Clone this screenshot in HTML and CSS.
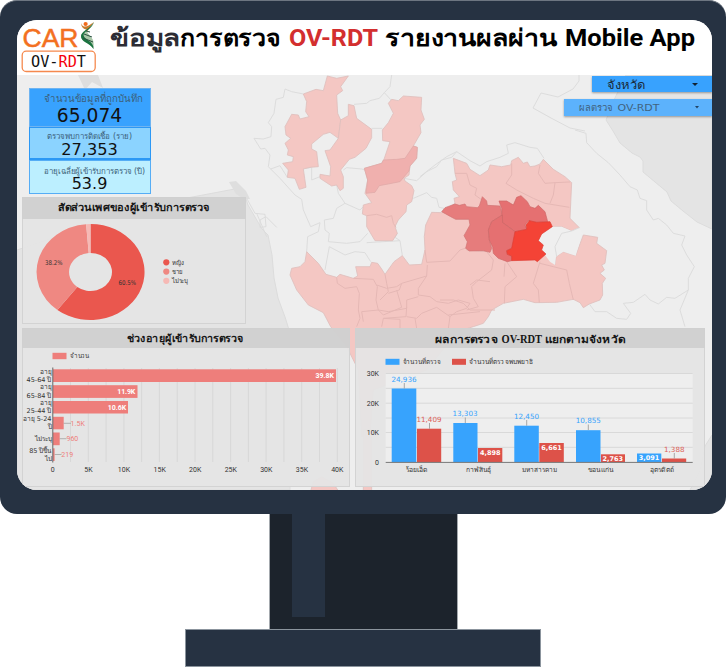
FILE: index.html
```html
<!DOCTYPE html>
<html lang="th">
<head>
<meta charset="utf-8">
<title>OV-RDT Dashboard</title>
<link rel="stylesheet" href="styles.css">
</head>
<body>
<div class="monitor">
  <div class="screen">
    <header class="header">
      <svg class="logo" viewBox="17 20 84 55" width="84" height="55">
        <text class="logo-car" x="22.5" y="47.3" textLength="56" lengthAdjust="spacingAndGlyphs">CAR</text>
        <path d="M94 22C90 25 87 27 84 26.500C82.500 26 81.500 24.500 81 23C81.500 27 83 29 86 29.500C85 32 83 34 82 36L85 34C88 30 91 26 94 22Z" fill="#c77a2c"/>
        <circle cx="85.600" cy="24" r="2.100" fill="#f26a1b"/>
        <path d="M87 29C86 33 91 36 93 40C94 43 93.500 46 93.500 49C91 44 83 42 81 37C80.500 34 84 31 87 29Z" fill="#a9c7a8"/>
        <path d="M94 22C92 29 84 31 83.500 35C84 40 94 41 93.500 49C90 43 80.500 42 81 36C81.500 31 90 29 94 22Z" fill="#1b7340"/>
        <path d="M84 34L92 37M83 38L93 42M86 31L90 32" stroke="#2a5040" stroke-width="1"/>
        <rect x="22.200" y="51.200" width="73" height="20.300" rx="4" fill="#fff" stroke="#f5894e" stroke-width="1.300"/>
        <text class="logo-mono" x="31" y="66.500" textLength="55" lengthAdjust="spacingAndGlyphs">OV-<tspan fill="#f5000b">RD</tspan>T</text>
      </svg>
      <svg class="title" viewBox="101 20 611 55" width="611" height="55" role="heading">
        <text x="110" y="45.500" textLength="70" lengthAdjust="spacingAndGlyphs" fill="#2c2c34">ข้อมูล</text>
        <text x="180" y="45.500" textLength="101" lengthAdjust="spacingAndGlyphs">การตรวจ</text>
        <text x="289" y="45.500" textLength="89" lengthAdjust="spacingAndGlyphs" fill="#d32f2f">OV-RDT</text>
        <text x="385" y="45.500" textLength="172" lengthAdjust="spacingAndGlyphs">รายงานผลผ่าน</text>
        <text x="565" y="45.500" textLength="130" lengthAdjust="spacingAndGlyphs">Mobile App</text>
      </svg>
    </header>

    <main class="dashboard">
      <svg class="map" viewBox="17 75 695 415" width="695" height="415">
        <path class="sea" d="M626 75L614 100 606 120 613 131 620 143 632 153 640 157 643 161 643 172 655 182 667 192 671 201 683 211 697 222 712 229V75Z"/>
        <path class="sea" d="M17 328V250L150 205 240 188 245 196 248 205 255 217 262 229 268 235 272 255 274 278 278 298 285 317 290 333V490H17Z"/>
        <path class="sea" d="M712 435L705 446 700 470 690 490H712Z"/>
        <path class="isle" d="M78 75L85 90 92 82 103 88 98 75Z"/>
        <path class="isle" d="M229 182l7-1 10 10 4 8-6 0-8-5z"/>
        <g transform="translate(240 70) scale(.33333)">
          <g class="border">
            <path d="M455 15L450 50 433 68 418 85 390 92 380 100 342 103M433 68L455 92M190 72L155 65 135 57 130 82 108 88 102 130 85 158 95 170 93 200 70 207 42 205 62 237 75 235 90 255 85 290 120 325 165 375 185 388 190 420 212 470 240 458 235 485 203 500 200 545"/>
            <path d="M92 297L120 287 142 322M198 295L215 292 215 330 240 320M290 345L295 370 315 400 290 415 280 445 253 450 255 480 268 490 265 515 320 520 360 515 383 490M310 300L320 293 365 297 375 300M315 400L360 420 370 410M395 175L427 175M268 530L315 555 345 545 375 548 392 575M268 530L255 600M380 518L480 512 487 557M472 490L465 502 480 512M498 400L520 385 560 368 575 382 590 385 597 412 612 415M492 325L530 332 560 305 590 290 605 270 635 262 650 245"/>
            <path d="M20 385L45 430 75 433 78 470 60 472 60 450 78 440 110 472M50 430L80 500"/>
          </g>
          <g class="low">
            <path d="M262 18L290 25 325 18 302 50 308 62 290 75 293 130 302 150 295 205 270 187 250 193 215 222 215 237 230 245 235 290 210 292 190 297 198 352 178 358 165 325 142 322 145 300 128 280 158 275 160 260 142 255 145 240 135 220 152 205 138 195 135 170 155 133 175 135 180 147 207 140 197 125 200 95 190 72 228 58 250 62Z"/>
            <path d="M325 103L342 107 350 145 395 178 395 203 378 235 345 262 328 268 302 300 310 320 310 355 300 362 290 345 275 348 240 325 240 313 270 318 272 290 255 242 270 240 295 205 302 150 325 137Z"/>
            <path d="M490 78L545 82 543 120 553 148 540 165 543 188 520 228 532 232 530 265 510 288 507 315 492 325 495 333 515 347 522 362 515 395 500 405 498 425 475 450 465 470 472 490 458 512 405 512 380 470 380 437 367 432 370 405 395 398 375 370 383 330 373 295 425 280 432 268 450 215 428 212 427 180 445 158 460 130 445 100 455 88 475 92Z"/>
            <path d="M200 545L235 580 258 613 290 622 300 613 340 625 353 618 347 590 390 590 395 577 413 580 425 597 435 613 462 575 487 557 508 585 545 583 555 540 553 500 557 465 575 427 605 428 645 400 642 385 658 380 640 360 637 335 650 330 645 310 640 265 680 280 690 298 720 317 745 300 750 285 785 290 812 285 815 272 835 262 850 280 862 276 870 290 885 288 900 282 910 268 940 298 975 320 995 338 990 445 1018 473 995 483 965 470 935 470 910 490 895 512 905 530 900 545 915 555 945 585 948 560 970 545 1007 557 1030 495 1073 502 1070 520 1100 542 1095 580 1085 585 1093 600 1080 610 1097 625 1087 640 1088 675 1080 690 1048 702 1030 713 1020 698 1000 688 950 697 885 698 850 688 790 700 755 720 745 740 730 760 700 770 660 782 640 800 560 900 480 930 400 960 390 1100 365 1100 355 900 320 830 272 770 250 728 205 705 170 660 150 615 155 595 180 590 195 575Z"/>
            <path d="M210 1270L220 1235 245 1220 280 1240 300 1270Z"/>
            <path d="M370 1080H395V1270H370Z"/>
          </g>
          <path class="land" d="M935 470L965 470 995 483 1018 473 1027 490 1007 557 970 545 948 560 945 585 930 575 915 555 900 545 910 530 895 512 905 492Z"/>
          <path class="border" d="M1018 473L995 483 965 490 945 530 950 560"/>
          <path class="mid" d="M520 228L532 232 530 265 510 288 507 303 480 335 445 342 418 347 405 367 378 370 383 330 373 295 425 280 430 270 470 268 495 265Z"/>
          <g class="province">
            <path d="M380 437L410 433 440 442 455 437 460 460 468 472M290 622L292 640 315 655 350 650 358 670 355 720 360 745 350 770M340 625L400 628 412 650 408 690 415 720 365 725 370 755M435 613L440 640 445 665 420 690M410 645L440 655 470 650 485 640 560 618 562 585M470 660L485 712 430 735 415 720M560 618L535 655 535 675 570 680 590 695 625 700 655 690 690 700 680 715 650 725 630 740 625 775M485 640L478 660 445 670M415 720L445 725 500 715 500 690 535 680M500 710L498 740 430 745 425 770M500 740L530 745 545 730 590 712 630 740M555 540L560 577 630 573 660 540 690 530M690 645L710 630 750 635M625 735L720 725M430 745L480 748 480 775M525 745L530 775"/>
            <path d="M645 310L680 310 690 345 710 355 705 375 740 400M815 280L815 315 798 340 830 360 880 385 915 400M900 285L895 310 915 340 945 338 940 375 930 400M915 400L988 412M945 338L990 336M680 540L740 545 760 570 755 600 710 635 695 650 700 685 715 710 680 720M795 580L792 620M800 575L830 620 795 650 793 700M900 575L880 640 895 660 898 698M900 580L940 590 980 600 988 640 1000 690M600 690L640 690 670 700 690 720 765 720"/>
          </g>
        </g>
        <g transform="translate(420 130) scale(.33333)">
          <path class="high" d="M65 245L75 233 105 222 118 226 135 222 140 230 172 233 178 228 187 200 200 213 202 226 240 228 247 255 215 275 205 300 208 330 215 355 210 367 190 362 148 363 137 355 142 335 132 317 150 285 147 268 107 268 92 260Z"/>
          <path class="higher" d="M237 213L260 213 280 225 290 202 303 197 322 215 330 230 345 235 355 226 375 245 383 275 350 277 325 272 315 285 320 298 285 305 265 290 247 278 245 235Z"/>
          <path class="higher" d="M247 255L248 278 285 305 282 340 275 355 260 362 262 373 275 378 275 392 262 395 235 385 220 370 218 352 208 330 205 300 215 275Z"/>
          <path class="top" d="M285 305L320 298 318 285 328 272 350 277 390 275 397 290 365 312 355 332 370 345 365 360 378 372 352 395 345 390 275 392 275 378 262 373 260 362 275 355Z"/>
          <g class="border">
            <path d="M110 65L150 92 180 108 200 95 240 82 265 70 260 45 285 38 330 52 352 55 372 85M110 65L80 80 45 105 0 140M465 0L498 10 500 38 530 70 565 98 600 135 630 170 652 180 660 205 680 212 680 240 700 270 715 265 740 285 760 310 795 318 785 345 800 375 823 410 805 445 805 480 765 505 740 502 715 522 690 510 675 493 640 517 610 520 632 550 620 568 590 565 560 545 525 545 508 522M805 480L780 540 795 590"/>
          </g>
        </g>
        <path class="border" d="M579 75L579 81 573 89 558 97 541 93 533 108 551 118 570 128 585 131"/>
      </svg>

      <div class="upper">
        <div class="side">
          <section class="cards">
            <div class="card card-a"><svg viewBox="0 0 122 39"><text class="lbl" x="15" y="13.500" font-size="10" textLength="99" lengthAdjust="spacingAndGlyphs">จำนวนข้อมูลที่ถูกบันทึก</text><text class="num" x="60.500" y="33.500" font-size="18.700">65,074</text></svg></div>
            <div class="card card-b"><svg viewBox="0 0 122 33"><text class="lbl" x="18" y="12" font-size="8" textLength="85" lengthAdjust="spacingAndGlyphs">ตรวจพบการติดเชื้อ (ราย)</text><text class="num" x="60.500" y="27.700" font-size="16.200">27,353</text></svg></div>
            <div class="card card-c"><svg viewBox="0 0 122 34"><text class="lbl" x="15" y="13.500" font-size="8" textLength="101" lengthAdjust="spacingAndGlyphs">อายุเฉลี่ยผู้เข้ารับการตรวจ (ปี)</text><text class="num" x="60.500" y="29.300" font-size="16">53.9</text></svg></div>
          </section>
          <section class="panel gender">
            <h2 class="panel-head"><svg viewBox="22 197 224 22"><text x="58" y="211.300" textLength="152" lengthAdjust="spacingAndGlyphs">สัดส่วนเพศของผู้เข้ารับการตรวจ</text></svg></h2>
            <svg class="chart" viewBox="23 219 222 104">
              <path d="M90.500 224A54 48 0 1 1 57.400 309.900L77.300 287A21.500 19 0 1 0 90.500 253Z" fill="#ea574e"/>
              <path d="M57.400 309.900A54 48 0 0 1 86.100 224.200L88.700 253.100A21.500 19 0 0 0 77.300 287Z" fill="#ef8882"/>
              <path d="M86.100 224.200L90.500 224V253L88.700 253.100Z" fill="#f6b9b5"/>
              <g class="tiny">
                <text x="45" y="264.500" textLength="17.500" lengthAdjust="spacingAndGlyphs">38.2%</text>
                <text x="118.500" y="285.200" textLength="17.500" lengthAdjust="spacingAndGlyphs">60.5%</text>
                <text x="172" y="264.700" textLength="12" lengthAdjust="spacingAndGlyphs">หญิง</text>
                <text x="172" y="273.700" textLength="11" lengthAdjust="spacingAndGlyphs">ชาย</text>
                <text x="172" y="283" textLength="16" lengthAdjust="spacingAndGlyphs">ไม่ระบุ</text>
              </g>
              <circle cx="166.300" cy="262.300" r="3.100" fill="#ea574e"/>
              <circle cx="166.300" cy="271.600" r="3.100" fill="#ef8882"/>
              <circle cx="166.300" cy="280.800" r="3.100" fill="#f6b9b5"/>
            </svg>
          </section>
        </div>
        <div class="filters">
          <div class="filter filter-a"><svg viewBox="592 76 120 16"><text x="607" y="88.700" font-size="12" fill="#1b2a38" textLength="39" lengthAdjust="spacingAndGlyphs">จังหวัด</text><path d="M692 83h6l-3 3z" fill="#123"/></svg></div>
          <div class="filter filter-b"><svg viewBox="564 99 148 17"><text x="579" y="111.300" font-size="9.500" fill="#41627e" textLength="34" lengthAdjust="spacingAndGlyphs">ผลตรวจ</text><text x="617.500" y="111.300" font-size="9.500" fill="#41627e" textLength="42" lengthAdjust="spacingAndGlyphs">OV-RDT</text><path d="M695 106h4l-2 2.500z" fill="#246"/></svg></div>
        </div>
      </div>

      <div class="lower">
        <section class="panel ages">
          <h2 class="panel-head"><svg viewBox="22 328 328 20"><text x="126.500" y="342.300" textLength="117" lengthAdjust="spacingAndGlyphs">ช่วงอายุผู้เข้ารับการตรวจ</text></svg></h2>
          <svg class="chart" viewBox="23 348 326 138">
            <path class="grid" d="M70.500 368V462M88.300 368V462M106.100 368V462M123.900 368V462M141.600 368V462M159.400 368V462M177.200 368V462M195 368V462M212.800 368V462M230.600 368V462M248.400 368V462M266.100 368V462M283.900 368V462M301.700 368V462M319.500 368V462M337.300 368V462"/>
            <g fill="#ee7e7b">
              <rect x="52.500" y="352.800" width="14" height="6.400"/>
              <rect x="53" y="369.300" width="283" height="12.700"/>
              <rect x="53" y="385.200" width="84.500" height="12.700"/>
              <rect x="53" y="401" width="75" height="12.500"/>
              <rect x="53" y="416.800" width="10.700" height="12.500"/>
              <rect x="53" y="432.500" width="6.700" height="12.700"/>
              <rect x="53" y="448.300" width="1.600" height="12.700"/>
            </g>
            <path d="M52.800 367.500V462.500" stroke="#666" stroke-width="1"/>
            <path d="M63.700 423.300H71M59.700 438.700H66.500M54.600 454.500H61.500" stroke="#999" stroke-width=".7"/>
            <g class="tiny">
              <text x="70" y="358.300" textLength="19" lengthAdjust="spacingAndGlyphs">จำนวน</text>
              <g text-anchor="end">
                <text x="51.500" y="373.500">อายุ</text><text x="51.500" y="381.700">45-64 ปี</text>
                <text x="51.500" y="389.300">อายุ</text><text x="51.500" y="397.600">65-84 ปี</text>
                <text x="51.500" y="405.300">อายุ</text><text x="51.500" y="413.200">25-44 ปี</text>
                <text x="51.500" y="421.300">อายุ 5-24</text><text x="51.500" y="429.200">ปี</text>
                <text x="51.500" y="440.700">ไม่ระบุ</text>
                <text x="51.500" y="453">85 ปีขึ้น</text><text x="51.500" y="460.700">ไป</text>
              </g>
              <g text-anchor="middle" class="ticks">
                <text x="52.700" y="471.800">0</text><text x="88.500" y="471.800">5K</text><text x="124" y="471.800">10K</text><text x="159.700" y="471.800">15K</text><text x="195.200" y="471.800">20K</text><text x="230.800" y="471.800">25K</text><text x="266.300" y="471.800">30K</text><text x="301.900" y="471.800">35K</text><text x="337.300" y="471.800">40K</text>
              </g>
            </g>
            <g class="value inside" text-anchor="end">
              <text x="334" y="378" textLength="18.500">39.8K</text><text x="135.300" y="393.500" textLength="18">11.9K</text><text x="126.200" y="409.500" textLength="18.500">10.6K</text>
            </g>
            <g class="value" fill="#ee7e7b">
              <text x="70.500" y="425.500" textLength="14.500">1.5K</text><text x="66.500" y="441">960</text><text x="61.300" y="456.800">219</text>
            </g>
          </svg>
        </section>
        <section class="panel results">
          <h2 class="panel-head"><svg viewBox="355 328 350 20"><text x="435" y="343" textLength="63" lengthAdjust="spacingAndGlyphs">ผลการตรวจ</text><text class="serif" x="501.500" y="343" textLength="40.500" lengthAdjust="spacingAndGlyphs">OV-RDT</text><text x="545" y="343" textLength="80" lengthAdjust="spacingAndGlyphs">แยกตามจังหวัด</text></svg></h2>
          <svg class="chart" viewBox="356 348 348 138">
            <rect x="385.700" y="373.300" width="307" height="89" fill="#eee"/>
            <path class="grid" d="M385.700 373.500h307M385.700 388.300h307M385.700 403.200h307M385.700 418h307M385.700 432.500h307M385.700 447.300h307"/>
            <g fill="#37a3fd">
              <rect x="385.500" y="358.800" width="14" height="6"/>
              <rect x="391.700" y="388.500" width="24.600" height="73.800"/><rect x="453.300" y="423" width="24.200" height="39.300"/><rect x="514.300" y="425.700" width="24.500" height="36.600"/><rect x="576" y="430.200" width="24.500" height="32.100"/><rect x="637" y="453.500" width="24.300" height="8.800"/>
            </g>
            <g fill="#dd5249">
              <rect x="452" y="358.800" width="14" height="6"/>
              <rect x="417" y="428.700" width="24.200" height="33.600"/><rect x="478" y="448" width="24.300" height="14.300"/><rect x="539.300" y="443" width="24.500" height="19.300"/><rect x="601" y="454.300" width="24" height="8"/><rect x="662" y="458.500" width="24.200" height="3.800"/>
            </g>
            <path d="M385.700 462.400h307" stroke="#777" stroke-width="1"/>
            <path d="M404.300 383V388.500M429.500 423V428.700M465.300 417.500V423M526.700 420V425.700M588.300 424.500V430M674.300 453V458.500" stroke="#888" stroke-width=".7"/>
            <g class="tiny">
              <text x="402.500" y="364.200" textLength="38.500" lengthAdjust="spacingAndGlyphs">จำนวนที่ตรวจ</text>
              <text x="469" y="364.200" textLength="64" lengthAdjust="spacingAndGlyphs">จำนวนที่ตรวจพบพยาธิ</text>
              <g text-anchor="end" class="axis"><text x="379" y="375.900">30K</text><text x="379" y="405.500">20K</text><text x="379" y="435.200">10K</text><text x="379" y="465">0</text></g>
              <text x="405.500" y="471.800" textLength="22" lengthAdjust="spacingAndGlyphs">ร้อยเอ็ด</text>
              <text x="466" y="471.800" textLength="25" lengthAdjust="spacingAndGlyphs">กาฬสินธุ์</text>
              <text x="521.500" y="471.800" textLength="35" lengthAdjust="spacingAndGlyphs">มหาสารคาม</text>
              <text x="588" y="471.800" textLength="25" lengthAdjust="spacingAndGlyphs">ขอนแก่น</text>
              <text x="650" y="471.800" textLength="24" lengthAdjust="spacingAndGlyphs">อุตรดิตถ์</text>
            </g>
            <g class="value wide" fill="#37a3fd">
              <text x="404" y="381.800">24,936</text><text x="465" y="416.300">13,303</text><text x="526.500" y="418.700">12,450</text><text x="588.300" y="423.200">10,855</text>
            </g>
            <g class="value wide" fill="#dd6259"><text x="429" y="422">11,409</text><text x="674.300" y="452">1,388</text></g>
            <g class="value wide inside"><text x="490.300" y="455">4,898</text><text x="551.500" y="450">6,661</text><text x="612.700" y="461">2,763</text><text x="649" y="460">3,091</text></g>
          </svg>
        </section>
      </div>
    </main>
  </div>
</div>
<div class="neck"><div class="shine"></div></div>
<div class="base"></div>
</body>
</html>
```

FILE: styles.css
```css
* { box-sizing: border-box; }
body { margin: 0; width: 726px; height: 667px; overflow: hidden; background: #fff; font-family: "DejaVu Sans", "Noto Sans", sans-serif; }
svg { display: block; }

.monitor { height: 514px; padding: 20px 14px 24px 17px; border-radius: 17px; background: #263242; border-top: 1px solid #6d7681; padding-top: 19px; }
.screen { height: 470px; overflow: hidden; border-radius: 20px; background: #eee; }
.header { display: flex; height: 55px; background: #fff; }
.logo-car { font: 26px "Liberation Sans", sans-serif; fill: #f37021; stroke: #f37021; stroke-width: .5; }
.logo-mono { font: 15px "DejaVu Sans Mono", monospace; fill: #111; }
.title { font: bold 23.5px Roboto, "Noto Sans", sans-serif; }

.dashboard { position: relative; height: 415px; padding: 1px 0 0 5px; display: flex; flex-direction: column; }
.map { position: absolute; left: 0; top: 0; }
.sea { fill: #e4e4e4; stroke: #dcdcdc; }
.isle { fill: #dedede; }
.land { fill: #efefef; }
.border { fill: none; stroke: #dcdcdc; stroke-width: 3; }
svg > .border { stroke-width: 1; }
.low { fill: #f4c7c3; stroke: #dfbfbd; stroke-width: 2.5; }
.mid { fill: #f0b0ae; stroke: #dda8a6; stroke-width: 2; }
.province { fill: none; stroke: #e5b8b5; stroke-width: 3; }
.high { fill: #e67c7c; stroke: #cf7272; stroke-width: 2; }
.higher { fill: #e57071; stroke: #cc6767; stroke-width: 2; }
.top { fill: #f44336; stroke: #dd4037; stroke-width: 2; }

.upper { position: relative; display: flex; justify-content: space-between; height: 252px; }
.side { width: 224px; padding-top: 12px; }
.cards { width: 122px; margin: 0 0 3px 7px; }
.card { border: 1px solid #2c98f5; }
.card svg { width: 122px; margin: -1px; }
.card-a { height: 39px; background: #38a2fe; border-color: #6fb4f1; }
.card-b { height: 33px; background: #8bd3ff; border-width: 1px; border-bottom-width: 2px; }
.card-c { height: 34px; background: #bcefff; border-color: #55adf5; }
.lbl { fill: #3c5f7a; }
.num { fill: #111; text-anchor: middle; }

.panel { border: 1px solid #d3d3d3; background: rgba(228, 228, 228, .94); }
.panel-head { margin: -1px; background: rgba(207, 207, 207, .97); font-size: 10px; font-weight: bold; line-height: 1; }
.panel-head text { fill: #161616; }
.gender { height: 127px; }
.gender .panel-head { height: 22px; margin-bottom: 0; }
.serif { font-family: "Liberation Serif", serif; font-size: 12px; }
.lower { position: relative; display: flex; gap: 5px; height: 159px; }
.ages { width: 328px; }
.results { width: 350px; }
.lower .panel-head { height: 20px; margin-bottom: 0; }
.chart { width: 100%; }

.filters { display: flex; flex-direction: column; align-items: flex-end; gap: 7px; }
.filter { box-shadow: 0 1px 2px rgba(0, 0, 0, .35); }
.filter-a { width: 120px; height: 16px; background: #38a2fe; }
.filter-b { width: 148px; height: 17px; background: #5cb2fc; }

.grid { fill: none; stroke: #d6d6d6; stroke-width: .9; }
.tiny { font-size: 6.5px; fill: #333; }
.ticks, .axis { font: 7px Roboto, sans-serif; }
.value { font: 7px Roboto, sans-serif; }
.wide { font: 7.2px "DejaVu Sans", sans-serif; text-anchor: middle; }
.inside { fill: #fff; font-weight: bold; }
.wide.inside { font-size: 6.5px; }

.neck { width: 189px; height: 115px; margin-left: 268.5px; background: #1c232c; border: solid #a4a9ae; border-width: 0 .5px; }
.shine { width: 33px; height: 103px; margin-left: 22px; background: #263242; }
.base { width: 356px; height: 38px; margin-left: 185px; background: #263242; border: 1px solid #8b949d; }
```
